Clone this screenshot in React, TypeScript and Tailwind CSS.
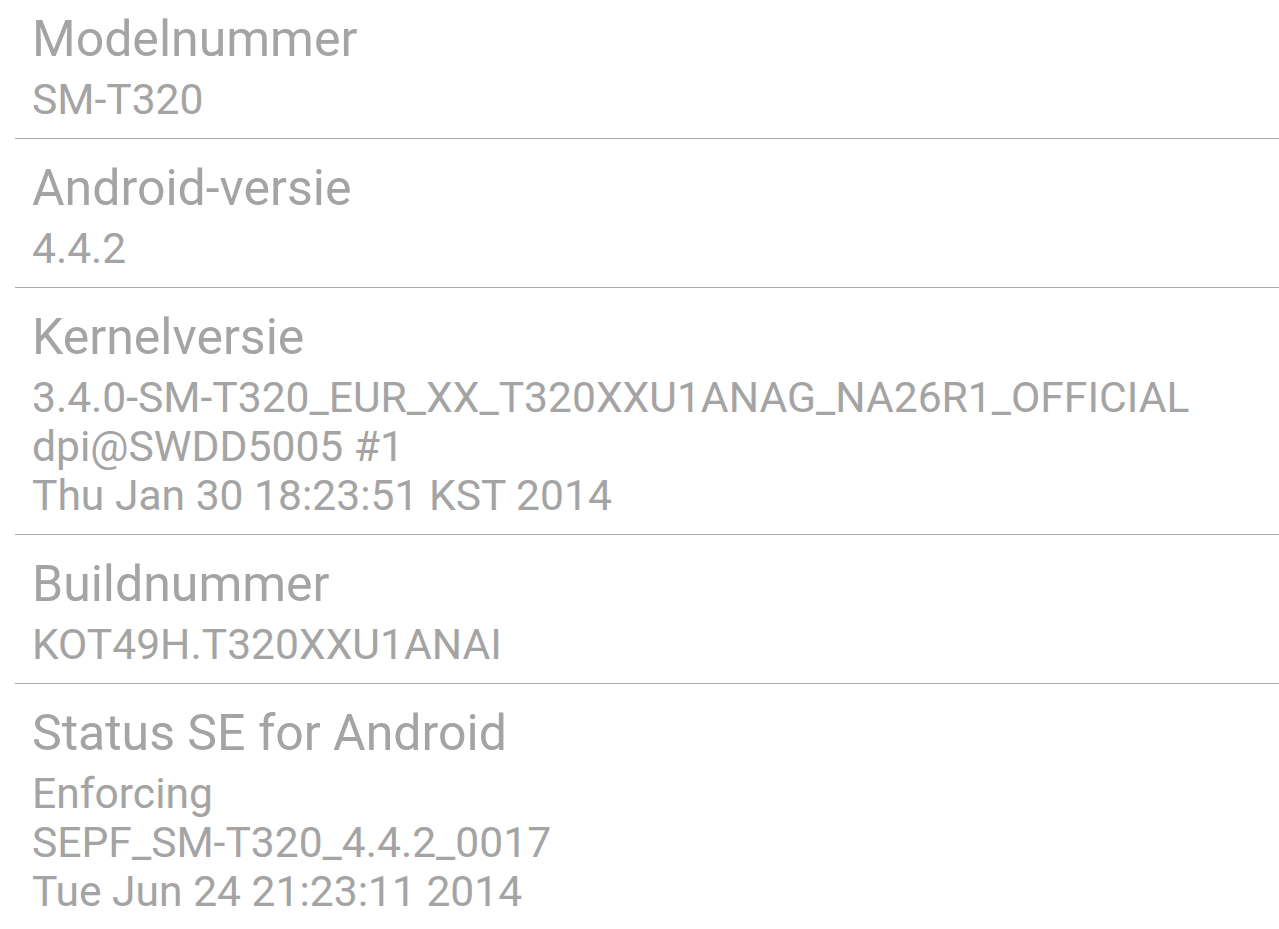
import React from "react";

const items: { title: string; lines: string[] }[] = [
  { title: "Modelnummer", lines: ["SM-T320"] },
  { title: "Android-versie", lines: ["4.4.2"] },
  {
    title: "Kernelversie",
    lines: [
      "3.4.0-SM-T320_EUR_XX_T320XXU1ANAG_NA26R1_OFFICIAL",
      "dpi@SWDD5005 #1",
      "Thu Jan 30 18:23:51 KST 2014",
    ],
  },
  { title: "Buildnummer", lines: ["KOT49H.T320XXU1ANAI"] },
  {
    title: "Status SE for Android",
    lines: ["Enforcing", "SEPF_SM-T320_4.4.2_0017", "Tue Jun 24 21:23:11 2014"],
  },
];

export default function App() {
  return (
    <div
      className="w-[1279px] h-[929px] overflow-hidden bg-white text-[#a4a4a4]"
      style={{ fontFamily: "Roboto, 'Noto Sans', sans-serif" }}
    >
      {items.map((it, i) => (
        <div key={it.title}>
          {i > 0 && <div className="ml-[15px] h-px bg-[#aaaaaa]" />}
          <div className={`${i === 0 ? "pt-[11px]" : "pt-[21px]"} pb-[14px] pl-[32px]`}>
            <div className="text-[50px] leading-[56px] whitespace-nowrap">{it.title}</div>
            <div className="mt-[8px] text-[42.6px] leading-[49px]">
              {it.lines.map((l) => (
                <div key={l} className="whitespace-nowrap">{l}</div>
              ))}
            </div>
          </div>
        </div>
      ))}
    </div>
  );
}
